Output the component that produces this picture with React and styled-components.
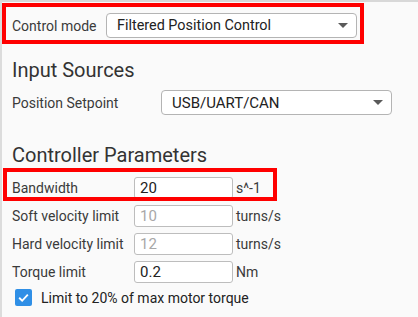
import React from "react";
import styled, { createGlobalStyle } from "styled-components";

const GlobalStyle = createGlobalStyle`
    html, body {
        margin: 0;
        padding: 0;
        background: #fafafa;
    }
    body {
        font-family: Roboto, "Liberation Sans", sans-serif;
        color: #333;
    }
`;

const params = [
    { label: "Bandwidth", value: "20", unit: "s^-1", mark: true },
    { label: "Soft velocity limit", placeholder: "10", unit: "turns/s" },
    { label: "Hard velocity limit", placeholder: "12", unit: "turns/s" },
    { label: "Torque limit", value: "0.2", unit: "Nm" }
];

function Arrow() {
    return (
        <svg width="10" height="5" viewBox="0 0 10 5">
            <path d="M0 0 L10 0 L5 5 Z" fill="#5a5a5a" />
        </svg>
    );
}

function Dropdown({ text, width, size }) {
    return (
        <SelectBox $width={width} $size={size}>
            <span>{text}</span>
            <Arrow />
        </SelectBox>
    );
}

export default function App() {
    return (
        <>
            <GlobalStyle />
            <Panel>
                <Row $mark={{ left: 0, top: -10, width: 362, height: 41 }}>
                    <Label $width={94}>Control mode</Label>
                    <Dropdown text="Filtered Position Control" width={251} size={14.4} />
                </Row>

                <Heading $top={20}>Input Sources</Heading>
                <Row $top={8}>
                    <Label $width={149}>Position Setpoint</Label>
                    <Dropdown text="USB/UART/CAN" width={231} size={15} />
                </Row>

                <Heading $top={28}>Controller Parameters</Heading>
                <ParamList>
                    {params.map((p) => (
                        <ParamRow
                            key={p.label}
                            $mark={p.mark ? { left: 1, top: -9, width: 274, height: 33 } : null}
                        >
                            <Label $width={122}>{p.label}</Label>
                            <NumberInput readOnly value={p.value || ""} placeholder={p.placeholder} />
                            <Unit>{p.unit}</Unit>
                        </ParamRow>
                    ))}
                    <CheckRow>
                        <CheckBox>
                            <svg width="13" height="13" viewBox="0 0 24 24">
                                <path d="M4 12.5 L9.5 18 L20 6.5" fill="none" stroke="#fff" strokeWidth="3.4" />
                            </svg>
                        </CheckBox>
                        <span>Limit to 20% of max motor torque</span>
                    </CheckRow>
                </ParamList>
            </Panel>
        </>
    );
}

const Panel = styled.div`
    min-height: 100vh;
    box-sizing: border-box;
    border-top: 2px solid #d8d8d8;
    border-left: 2px solid #dcdcdc;
    padding-top: 11px;
    background: #fafafa;
`;

const Row = styled.div`
    position: relative;
    display: flex;
    align-items: center;
    height: 25px;
    padding-left: 10px;
    margin-top: ${(p) => (p.$top ? p.$top : 0)}px;

    &::after{
        content: "";
        display: ${(p) => (p.$mark ? "block" : "none")};
        position: absolute;
        box-sizing: border-box;
        border: 4px solid #ff0000;
        left: ${(p) => (p.$mark ? p.$mark.left : 0)}px;
        top: ${(p) => (p.$mark ? p.$mark.top : 0)}px;
        width: ${(p) => (p.$mark ? p.$mark.width : 0)}px;
        height: ${(p) => (p.$mark ? p.$mark.height : 0)}px;
        pointer-events: none;
    }
`;

const Label = styled.div`
    width: ${(p) => p.$width}px;
    flex-shrink: 0;
    font-size: 14px;
    color: #3a3a3a;
    white-space: nowrap;
`;

const SelectBox = styled.div`
    width: ${(p) => p.$width}px;
    height: 25px;
    box-sizing: border-box;
    border: 1px solid #b4b4b4;
    border-radius: 4px;
    background: #fff;
    display: flex;
    align-items: center;
    justify-content: space-between;
    padding: 0 8px 0 10px;
    font-size: ${(p) => p.$size}px;
    color: #222;
`;

const Heading = styled.h2`
    margin: ${(p) => p.$top}px 0 0 0;
    padding-left: 10px;
    font-size: 20px;
    line-height: 24px;
    font-weight: 400;
    color: #333;
`;

const ParamList = styled.div`
    display: flex;
    flex-direction: column;
    gap: 6px;
    margin-top: 10px;
`;

const ParamRow = styled(Row)`
    height: 22px;
`;

const NumberInput = styled.input`
    width: 99px;
    height: 22px;
    box-sizing: border-box;
    border: 1px solid #bdbdbd;
    border-radius: 3px;
    background: #fff;
    padding: 0 5px;
    font-family: Roboto, "Liberation Sans", sans-serif;
    font-size: 15px;
    color: #222;
    outline: none;

    &::placeholder{
        color: #a8a8a8;
    }
`;

const Unit = styled.span`
    margin-left: 3px;
    font-size: 14px;
    color: #3a3a3a;
`;

const CheckRow = styled.div`
    display: flex;
    align-items: center;
    gap: 9px;
    padding-left: 13px;
    height: 17px;
    font-size: 14px;
    color: #222;
`;

const CheckBox = styled.div`
    width: 17px;
    height: 17px;
    border-radius: 2px;
    background: #2f8fe6;
    display: flex;
    align-items: center;
    justify-content: center;
`;
